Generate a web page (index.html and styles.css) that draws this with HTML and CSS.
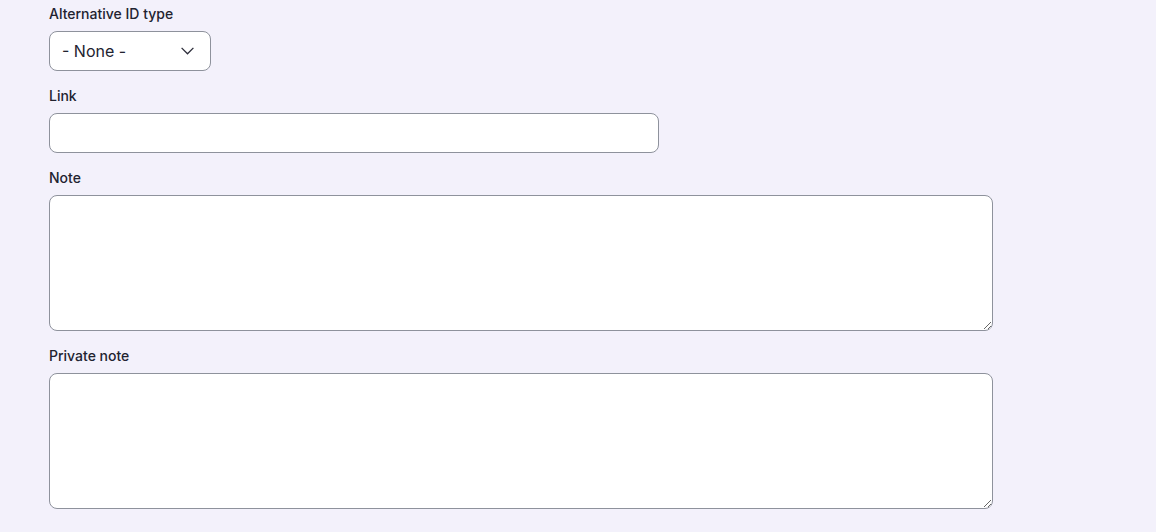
FILE: index.html
```html
<!DOCTYPE html>
<html lang="en">
<head>
<meta charset="utf-8">
<link rel="stylesheet" href="styles.css">
</head>
<body>
<form class="form">
  <div class="field">
    <label class="label" for="alt">Alternative ID type</label>
    <div class="select-wrap">
      <select id="alt" class="select"><option>- None -</option></select>
      <svg class="chevron" width="13" height="8" viewBox="0 0 13 8"><path d="M0.6 0.9l5.9 5.9 5.9-5.9" fill="none" stroke="#2c2d3a" stroke-width="1.3"/></svg>
    </div>
  </div>
  <div class="field">
    <label class="label" for="link">Link</label>
    <input id="link" class="input" type="text">
  </div>
  <div class="field">
    <label class="label" for="note">Note</label>
    <textarea id="note" class="textarea"></textarea>
  </div>
  <div class="field">
    <label class="label" for="pnote">Private note</label>
    <textarea id="pnote" class="textarea"></textarea>
  </div>
</form>
</body>
</html>
```
FILE: styles.css
```css
html, body {
  margin: 0;
  background: #f3f1fb;
}
body {
  font-family: Inter, "Noto Sans", sans-serif;
  color: #222330;
}
.form {
  padding: 4px 0 0 49px;
  display: flex;
  flex-direction: column;
  gap: 15px;
}
.field {
  display: flex;
  flex-direction: column;
  align-items: flex-start;
  gap: 7px;
}
.label {
  font-size: 14px;
  font-weight: 500;
  line-height: 20px;
  color: #222330;
}
.select-wrap {
  position: relative;
  width: 162px;
  height: 40px;
}
.select {
  appearance: none;
  -webkit-appearance: none;
  box-sizing: border-box;
  width: 162px;
  height: 40px;
  margin: 0;
  padding: 0 36px 0 12px;
  border: 1px solid #8e929c;
  border-radius: 8px;
  background: #fff;
  font-family: Inter, "Noto Sans", sans-serif;
  font-size: 16px;
  color: #222330;
}
.chevron {
  position: absolute;
  left: 132px;
  top: 16px;
  pointer-events: none;
}
.input {
  box-sizing: border-box;
  width: 610px;
  height: 40px;
  margin: 0;
  border: 1px solid #8e929c;
  border-radius: 8px;
  background: #fff;
}
.textarea {
  box-sizing: border-box;
  width: 944px;
  height: 136px;
  margin: 0;
  border: 1px solid #8e929c;
  border-radius: 8px;
  background: #fff;
  display: block;
}
```
